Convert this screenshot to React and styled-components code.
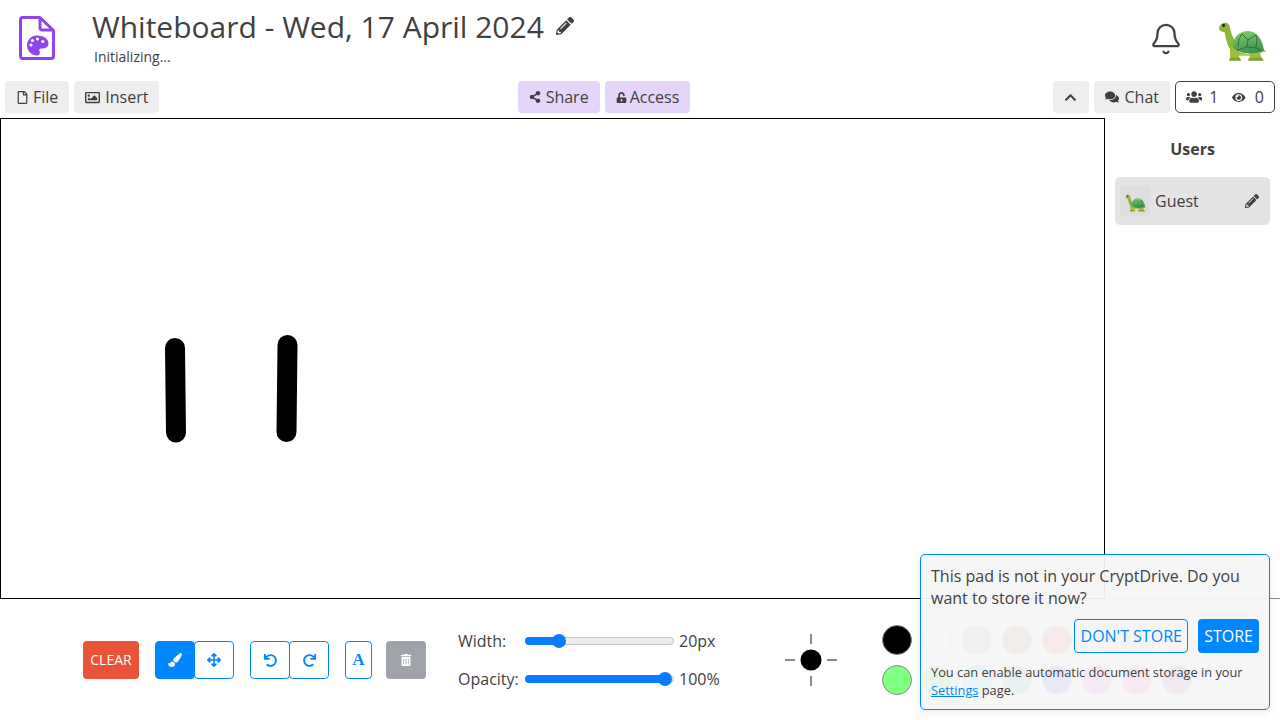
import React from 'react';
import styled, { createGlobalStyle } from 'styled-components';
import { Bell } from 'lucide-react';
import {
  FaRegFile,
  FaRegImage,
  FaShareAlt,
  FaUnlockAlt,
  FaPencilAlt,
  FaComments,
  FaUsers,
  FaEye,
  FaChevronUp,
  FaPaintBrush,
  FaArrowsAlt,
  FaUndo,
  FaRedo,
  FaTrashAlt,
} from 'react-icons/fa';

const PALETTE = [
  '#000000', '#ffffff', '#848484', '#8b4513', '#ff0000', '#ff8000', '#ffff00', '#ffffff',
  '#80ff80', '#00ff00', '#00ffff', '#008b8b', '#0000ff', '#ee00ee', '#ff00c0', '#800080',
];

const Turtle = ({ size, id }) => (
  <svg width={size} height={size * 0.85} viewBox="0 0 48 41">
    <defs>
      <linearGradient id={id} x1="0.3" y1="0" x2="0.6" y2="1">
        <stop offset="0" stopColor="#7ccb6e" />
        <stop offset="1" stopColor="#38904a" />
      </linearGradient>
    </defs>
    <path d="M1 7C2 1 10 0 11.500 5C12.500 9 13 13 16 18L21 30L13 30C8 22 7.500 15 6.500 11C4 11 1 10 1 7Z" fill="#8cb63c" />
    <path d="M16 28C24 34 36 35 46 30L40 35L20 35Z" fill="#a9c64a" />
    <path d="M12 26L21 27L21 39L12 39Z" fill="#9dbf3f" />
    <path d="M12 37L22 37L23 40L11 40Z" fill="#7ea32e" />
    <path d="M32 31L41 30L44 38L32 39Z" fill="#9dbf3f" />
    <path d="M31 37L44 37L46 40L30 40Z" fill="#7ea32e" />
    <path d="M44 27L49 31L43 31Z" fill="#9dbf3f" />
    <path d="M15 27C14 16 22 10 30 10C39 10 45 19 46 30C36 34 23 34 15 27Z" fill={`url(#${id})`} />
    <path d="M24 13L30 19L38 14M30 19L29 26L19 29.500M29 26L38 27L43 30M38 27L39 19L38 14M21 18L24 13M21 18L20 25" stroke="#2a6a38" strokeWidth="0.9" fill="none" />
    <circle cx="5.500" cy="4.500" r="1.500" fill="#1c2410" />
  </svg>
);

const AppLogo = () => (
  <svg width="38" height="46" viewBox="0 0 38 46">
    <path
      d="M4 2.500H22L35.500 15.500V41A2.500 2.500 0 0 1 33 43.500H4A2.500 2.500 0 0 1 2.500 41V5A2.500 2.500 0 0 1 4 2.500Z"
      fill="none"
      stroke="#8f45ec"
      strokeWidth="3"
      strokeLinejoin="round"
    />
    <path d="M22 2.500V12.500A2.500 2.500 0 0 0 24.500 15H35" fill="none" stroke="#8f45ec" strokeWidth="3" />
    <path
      d="M19 20.500C25.500 20.500 30.500 24 30.500 28.500C30.500 32 27.500 33.500 24.500 33.500H23C21.500 33.500 20.800 34.700 21.500 36C22.500 38 21.500 40.500 19 40.500C13.500 40.500 9 36 9 30.500C9 25 13 20.500 19 20.500Z"
      fill="#8f45ec"
    />
    <g fill="#fff">
      <circle cx="13" cy="30" r="1.600" />
      <circle cx="14.500" cy="25.500" r="1.600" />
      <circle cx="19.500" cy="24" r="1.600" />
      <circle cx="24.800" cy="26.500" r="1.600" />
    </g>
  </svg>
);

const App = () => (
  <Page>
    <GlobalStyle />
    <Header>
      <LogoSlot>
        <AppLogo />
      </LogoSlot>
      <TitleBlock>
        <TitleRow>
          <Title>Whiteboard - Wed, 17 April 2024</Title>
          <FaPencilAlt size={18} />
        </TitleRow>
        <Status>Initializing...</Status>
      </TitleBlock>
      <BellSlot>
        <Bell size={34} strokeWidth={1.6} />
      </BellSlot>
      <AvatarSlot>
        <Turtle size={48} id="shell-big" />
      </AvatarSlot>
    </Header>

    <Toolbar>
      <ToolGroup>
        <ToolButton>
          <FaRegFile size={13} /> File
        </ToolButton>
        <ToolButton $gap={5}>
          <FaRegImage size={15} /> Insert
        </ToolButton>
      </ToolGroup>
      <CenterGroup>
        <ToolButton $accent $gap={5}>
          <FaShareAlt size={12} /> Share
        </ToolButton>
        <ToolButton $accent $gap={3}>
          <FaUnlockAlt size={11} /> Access
        </ToolButton>
      </CenterGroup>
      <ToolGroup>
        <ToolButton>
          <FaChevronUp size={13} />
        </ToolButton>
        <ToolButton $gap={6}>
          <FaComments size={14} /> Chat
        </ToolButton>
        <Counter>
          <FaUsers size={18} />
          <CountValue>1</CountValue>
          <FaEye size={15} />
          <ViewValue>0</ViewValue>
        </Counter>
      </ToolGroup>
    </Toolbar>

    <Workspace>
      <Canvas>
        <svg width="1103" height="479" viewBox="1 119 1103 479">
          <g stroke="#000" strokeWidth="20" strokeLinecap="round" fill="none">
            <line x1="175" y1="348" x2="176" y2="432.500" />
            <line x1="287.500" y1="345" x2="286.500" y2="432" />
          </g>
        </svg>
      </Canvas>
      <UsersPanel>
        <UsersTitle>Users</UsersTitle>
        <UserCard>
          <UserAvatar>
            <Turtle size={21} id="shell-small" />
          </UserAvatar>
          <UserName>Guest</UserName>
          <FaPencilAlt size={14} />
        </UserCard>
      </UsersPanel>
    </Workspace>

    <Controls>
      <ClearButton>CLEAR</ClearButton>
      <ButtonPair>
        <IconButton $active>
          <FaPaintBrush size={14} />
        </IconButton>
        <IconButton>
          <FaArrowsAlt size={14} />
        </IconButton>
      </ButtonPair>
      <ButtonPair>
        <IconButton>
          <FaUndo size={13} />
        </IconButton>
        <IconButton>
          <FaRedo size={13} />
        </IconButton>
      </ButtonPair>
      <TextButton>A</TextButton>
      <TrashButton>
        <FaTrashAlt size={12} />
      </TrashButton>
      <Sliders>
        <SliderLabel>Width:</SliderLabel>
        <SliderTrack>
          <SliderFill style={{ width: '23%' }} />
        </SliderTrack>
        <SliderValue>20px</SliderValue>
        <SliderLabel>Opacity:</SliderLabel>
        <SliderTrack>
          <SliderFill style={{ width: '95.5%' }} />
        </SliderTrack>
        <SliderValue>100%</SliderValue>
      </Sliders>
      <BrushPreview>
        <svg width="54" height="54" viewBox="0 0 54 54">
          <g stroke="#8a8a8a" strokeWidth="2">
            <line x1="0" y1="27" x2="10" y2="27" />
            <line x1="42" y1="27" x2="52" y2="27" />
            <line x1="26" y1="1" x2="26" y2="11" />
            <line x1="26" y1="43" x2="26" y2="53" />
          </g>
          <circle cx="26" cy="27" r="10.500" fill="#000" />
        </svg>
      </BrushPreview>
      <Palette>
        {PALETTE.map((color, i) => (
          <Swatch key={i} $color={color} />
        ))}
      </Palette>
    </Controls>

    <StorePopup>
      <PopupText>This pad is not in your CryptDrive. Do you want to store it now?</PopupText>
      <PopupActions>
        <OutlineButton>DON'T STORE</OutlineButton>
        <SolidButton>STORE</SolidButton>
      </PopupActions>
      <PopupHint>
        You can enable automatic document storage in your <a href="#settings">Settings</a> page.
      </PopupHint>
    </StorePopup>
  </Page>
);

const GlobalStyle = createGlobalStyle`
  html, body {
    margin: 0;
    padding: 0;
    background: #fff;
  }
  body {
    font-family: "Open Sans", "Liberation Sans", sans-serif;
    color: #3f4141;
    overflow: hidden;
  }
`;

const Page = styled.div`
  position: relative;
  width: 1280px;
  height: 720px;
  overflow: hidden;
`;

const Header = styled.header`
  display: flex;
  align-items: flex-start;
  height: 81px;
`;

const LogoSlot = styled.div`
  width: 92px;
  padding: 15px 0 0 18px;
  box-sizing: border-box;
`;

const TitleBlock = styled.div`
  flex: 1;
  padding-top: 6px;
`;

const TitleRow = styled.div`
  display: flex;
  align-items: center;
  gap: 12px;
  height: 40px;
`;

const Title = styled.h1`
  margin: 0;
  font-size: 30px;
  font-weight: 400;
  white-space: nowrap;
`;

const Status = styled.div`
  margin: 2px 0 0 2px;
  font-size: 14px;
  line-height: 18px;
`;

const BellSlot = styled.div`
  width: 52px;
  padding-top: 22px;
  margin-right: 26px;
  text-align: center;
`;

const AvatarSlot = styled.div`
  width: 62px;
  padding-top: 21px;
`;

const Toolbar = styled.div`
  display: flex;
  justify-content: space-between;
  padding: 0 5px;
  height: 37px;
  box-sizing: border-box;
`;

const ToolGroup = styled.div`
  display: flex;
  gap: 5px;
  height: 32px;
`;

const CenterGroup = styled(ToolGroup)`
  margin-right: 4px;
`;

const ToolButton = styled.button`
  display: flex;
  align-items: center;
  justify-content: center;
  gap: ${({ $gap }) => $gap ?? 4}px;
  min-width: 36px;
  height: 32px;
  padding: 0 11px;
  border: none;
  border-radius: 4px;
  background: ${({ $accent }) => ($accent ? '#e5d5fa' : '#eeeeee')};
  color: #3f4141;
  font: 400 16px "Open Sans", sans-serif;
`;

const Counter = styled.div`
  display: flex;
  align-items: center;
  height: 32px;
  width: 100px;
  padding: 0 10px;
  box-sizing: border-box;
  border: 1px solid #3f4141;
  border-radius: 5px;
  font-size: 16px;
`;

const CountValue = styled.span`
  margin: 0 14px 0 7px;
`;

const ViewValue = styled.span`
  margin-left: 9px;
`;

const Workspace = styled.main`
  display: flex;
  height: 481px;
`;

const Canvas = styled.div`
  width: 1105px;
  height: 481px;
  box-sizing: border-box;
  border: 1px solid #000;
  svg {
    display: block;
  }
`;

const UsersPanel = styled.aside`
  flex: 1;
  padding: 0 10px;
  border-bottom: 1px solid #8a8a8a;
`;

const UsersTitle = styled.div`
  margin-top: 20px;
  text-align: center;
  font-size: 16px;
  font-weight: 700;
  line-height: 22px;
`;

const UserCard = styled.div`
  display: flex;
  align-items: center;
  margin-top: 17px;
  height: 48px;
  padding: 0 11px 0 5px;
  border-radius: 5px;
  background: #e4e4e4;
`;

const UserAvatar = styled.div`
  display: flex;
  align-items: center;
  justify-content: center;
  width: 30px;
  height: 30px;
  border-radius: 4px;
  background: #dedede;
  padding-top: 4px;
  box-sizing: border-box;
`;

const UserName = styled.span`
  flex: 1;
  margin-left: 5px;
  font-size: 16px;
`;

const Controls = styled.section`
  display: flex;
  align-items: center;
  height: 121px;
  padding: 1px 0 0 83px;
  box-sizing: border-box;
`;

const ClearButton = styled.button`
  width: 56px;
  height: 38px;
  margin-right: 16px;
  padding: 0 0 2px;
  border: none;
  border-radius: 4px;
  background: #e9533a;
  color: #fff;
  font: 400 14px "Open Sans", sans-serif;
`;

const ButtonPair = styled.div`
  display: flex;
  margin-right: 16px;
`;

const IconButton = styled.button`
  display: flex;
  align-items: center;
  justify-content: center;
  width: 40px;
  height: 38px;
  padding: 0;
  border: 1px solid #0087ff;
  border-radius: 4px;
  background: ${({ $active }) => ($active ? '#0087ff' : '#fff')};
  color: ${({ $active }) => ($active ? '#fff' : '#0087ff')};
  & + & {
    margin-left: -1px;
  }
`;

const TextButton = styled.button`
  width: 27px;
  height: 38px;
  margin-right: 14px;
  padding: 0;
  border: 1px solid #0087ff;
  border-radius: 4px;
  background: #fff;
  color: #0087ff;
  font: 700 17px "Liberation Serif", serif;
`;

const TrashButton = styled.button`
  display: flex;
  align-items: center;
  justify-content: center;
  width: 40px;
  height: 38px;
  margin-right: 32px;
  padding: 0;
  border: none;
  border-radius: 4px;
  background: #a0a4aa;
  color: #fff;
`;

const Sliders = styled.div`
  display: grid;
  grid-template-columns: 67px 149px 66px;
  grid-auto-rows: 38px;
  align-items: center;
  width: 327px;
  font-size: 16px;
`;

const SliderLabel = styled.span``;

const SliderTrack = styled.div`
  height: 8px;
  border: 1px solid #c2c2c2;
  border-radius: 5px;
  background: #eeeeee;
  box-sizing: border-box;
  position: relative;
`;

const SliderFill = styled.div`
  position: relative;
  height: 8px;
  margin: -1px 0 0 -1px;
  border-radius: 5px;
  background: #0a7cff;
  &::after {
    content: '';
    position: absolute;
    right: -7px;
    top: -3px;
    width: 14px;
    height: 14px;
    border-radius: 50%;
    background: #0a7cff;
  }
`;

const SliderValue = styled.span`
  margin-left: 5px;
`;

const BrushPreview = styled.div`
  display: flex;
  width: 97px;
  svg {
    display: block;
  }
`;

const Palette = styled.div`
  display: grid;
  grid-template-columns: repeat(8, 30px);
  grid-auto-rows: 30px;
  gap: 10px;
`;

const Swatch = styled.div`
  box-sizing: border-box;
  border: 1px solid #888;
  border-radius: 50%;
  background: ${({ $color }) => $color};
`;

const StorePopup = styled.aside`
  position: absolute;
  left: 920px;
  top: 554px;
  width: 350px;
  height: 156px;
  box-sizing: border-box;
  padding: 10px;
  border: 1px solid #0087ff;
  border-radius: 5px;
  background: rgba(245, 245, 245, 0.95);
  box-shadow: 0 2px 8px rgba(0, 0, 0, 0.08);
`;

const PopupText = styled.div`
  font-size: 16px;
  line-height: 22px;
`;

const PopupActions = styled.div`
  display: flex;
  justify-content: flex-end;
  gap: 10px;
  margin-top: 10px;
`;

const OutlineButton = styled.button`
  width: 114px;
  height: 34px;
  padding: 0;
  border: 1px solid #0087ff;
  border-radius: 4px;
  background: #f5f5f5;
  color: #0087ff;
  font: 400 16px "Open Sans", sans-serif;
`;

const SolidButton = styled.button`
  height: 34px;
  padding: 0 6px;
  border: none;
  border-radius: 4px;
  background: #0087ff;
  color: #fff;
  font: 400 16px "Open Sans", sans-serif;
`;

const PopupHint = styled.div`
  margin-top: 10px;
  font-size: 12.8px;
  line-height: 18px;
  a {
    color: #0087ff;
  }
`;

export default App;
